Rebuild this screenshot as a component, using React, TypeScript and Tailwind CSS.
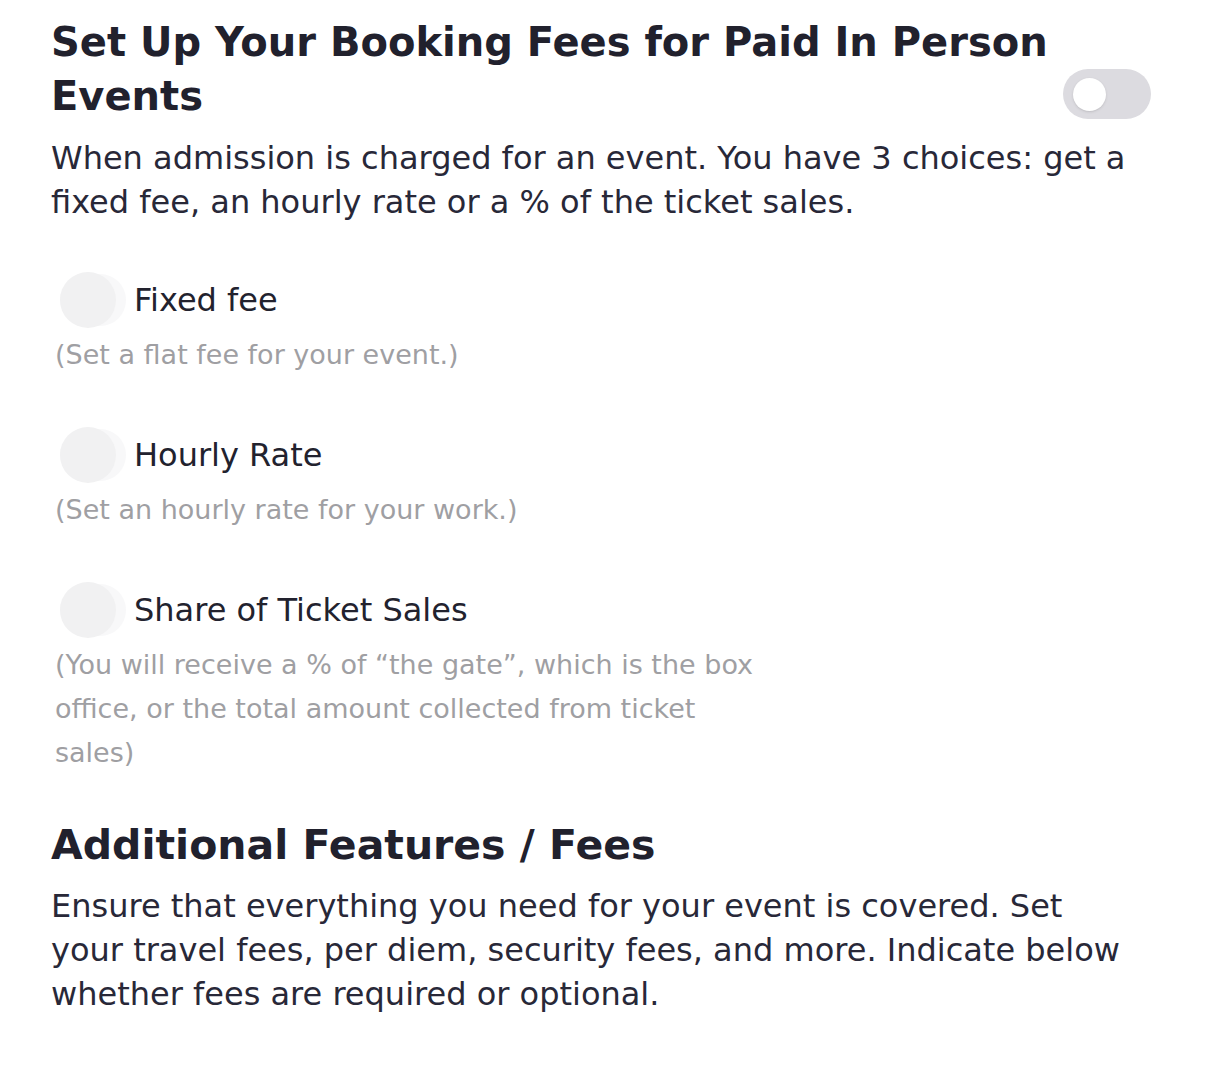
import React from 'react'

const options = [
  { label: 'Fixed fee', desc: '(Set a flat fee for your event.)' },
  { label: 'Hourly Rate', desc: '(Set an hourly rate for your work.)' },
  {
    label: 'Share of Ticket Sales',
    desc: '(You will receive a % of \u201cthe gate\u201d, which is the box office, or the total amount collected from ticket sales)',
  },
]

function FadedToggle() {
  return (
    <div className="relative ml-[5px] h-[56px] w-[66px] shrink-0">
      <div className="absolute inset-y-[2px] left-0 right-0 rounded-full bg-[#f8f8f9]" />
      <div className="absolute left-0 top-0 h-[56px] w-[56px] rounded-full bg-[#f1f1f2]" />
    </div>
  )
}

export default function App() {
  return (
    <div
      className="min-h-screen bg-white pl-[51px] pr-[63px] pt-[15px] text-[#282838]"
      style={{ fontFamily: '"DejaVu Sans", sans-serif' }}
    >
      {/* header */}
      <div className="flex items-end justify-between gap-[8px]">
        <h1 className="min-w-0 flex-1 text-[40px] font-bold leading-[54px] text-[#21212d]">
          Set Up Your Booking Fees for Paid In Person Events
        </h1>
        <button className="mb-[4px] flex h-[50px] w-[88px] shrink-0 items-center rounded-full bg-[#dcdbe0] pl-[10px]">
          <span className="h-[33px] w-[33px] rounded-full bg-white shadow-sm" />
        </button>
      </div>
      <p className="mt-[13px] text-[32px] leading-[44px]">
        When admission is charged for an event. You have 3 choices: get a fixed fee, an hourly rate or a % of the
        ticket sales.
      </p>

      {/* options */}
      <div className="mt-[48px] flex flex-col gap-[50px] pl-[4px]">
        {options.map(o => (
          <div key={o.label}>
            <div className="flex h-[56px] items-center gap-[8px]">
              <FadedToggle />
              <span className="text-[32px] text-[#22222e]">{o.label}</span>
            </div>
            <p className="mt-[5px] max-w-[715px] text-[27px] leading-[44px] text-[#9f9fa3]">{o.desc}</p>
          </div>
        ))}
      </div>

      {/* additional */}
      <h2 className="mt-[43px] text-[41px] font-bold leading-[54px] text-[#21212d]">Additional Features / Fees</h2>
      <p className="mt-[12px] max-w-[1090px] text-[32px] leading-[44px]">
        Ensure that everything you need for your event is covered. Set your travel fees, per diem, security fees, and
        more. Indicate below whether fees are required or optional.
      </p>
    </div>
  )
}
